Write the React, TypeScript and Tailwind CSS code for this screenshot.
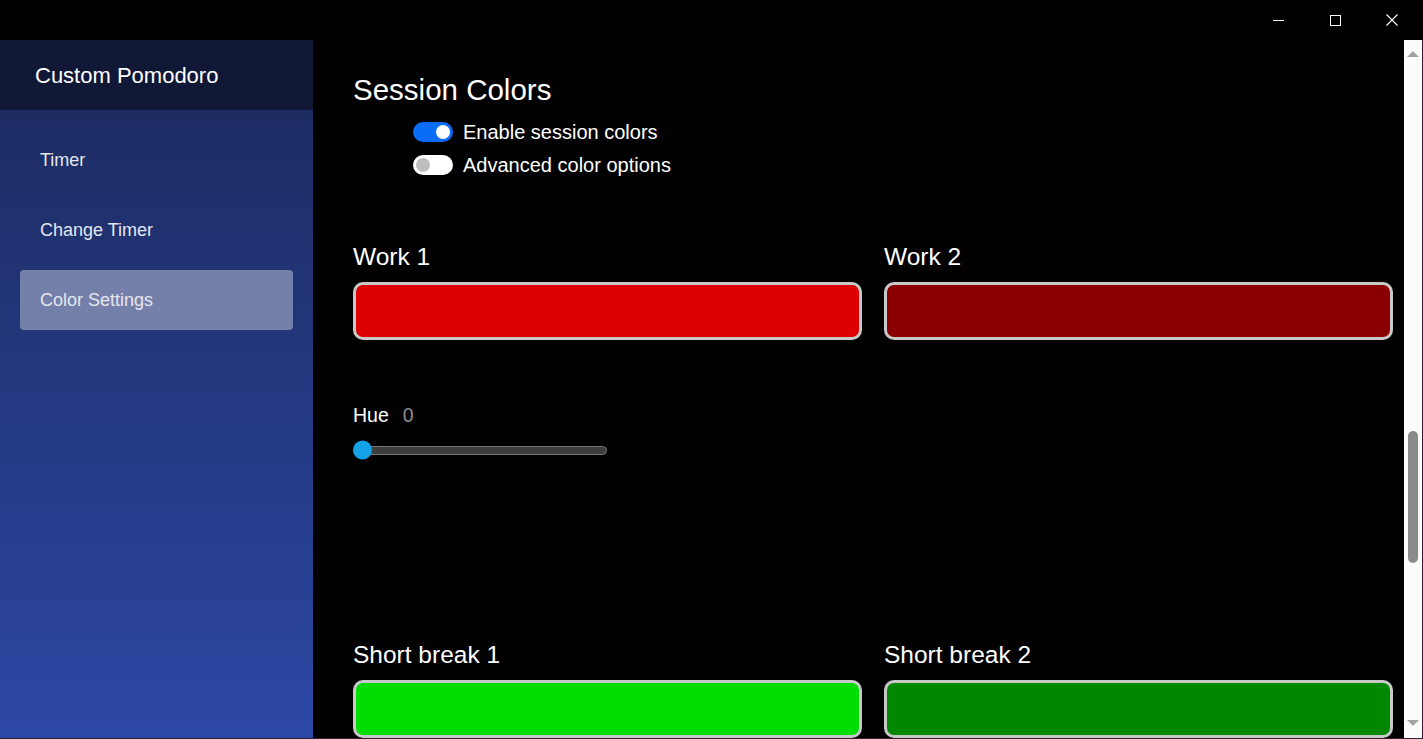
import React from 'react';

const font = { fontFamily: '"Liberation Sans", Arial, sans-serif' };

function Toggle({ on }: { on: boolean }) {
  return (
    <div
      className={`flex h-5 w-10 items-center rounded-full px-[3px] ${
        on ? 'justify-end bg-[#0b6cf5]' : 'justify-start bg-white'
      }`}
    >
      <div className={`h-[14px] w-[14px] rounded-full ${on ? 'bg-white' : 'bg-[#bdbdbd]'}`} />
    </div>
  );
}

function Swatch({ label, color }: { label: string; color: string }) {
  return (
    <div className="flex flex-1 flex-col">
      <div className="text-[24.5px] leading-[28px] text-white">{label}</div>
      <div
        className={`mt-[11px] h-[58px] rounded-[10px] border-[3px] border-[#c8c8c8] ${color}`}
      />
    </div>
  );
}

function TitleBar() {
  return (
    <div className="flex h-10 items-center justify-end bg-black pr-[2px]">
      <div className="flex h-10 w-[58px] items-center justify-center">
        <div className="h-px w-[11px] bg-white" />
      </div>
      <div className="flex h-10 w-[56px] items-center justify-center">
        <div className="h-[11px] w-[11px] border border-white" />
      </div>
      <div className="flex h-10 w-[58px] items-center justify-center">
        <svg width="12" height="12" viewBox="0 0 12 12">
          <path d="M0.5 0.5 L11.5 11.5 M11.5 0.5 L0.5 11.5" stroke="white" strokeWidth="1.1" />
        </svg>
      </div>
    </div>
  );
}

function Sidebar() {
  const items = ['Timer', 'Change Timer', 'Color Settings'];
  return (
    <div className="flex w-[313px] shrink-0 flex-col bg-gradient-to-b from-[#1b295c] to-[#2c48a5]">
      <div className="flex h-[70px] items-center bg-[#101836] pl-[35px] text-[22px] text-white">
        Custom Pomodoro
      </div>
      <div className="flex flex-col gap-[10px] px-5 pt-[20px]">
        {items.map((item) => (
          <div
            key={item}
            className={`flex h-[60px] items-center rounded-[4px] px-5 text-[18px] text-[#e4e6ee] ${
              item === 'Color Settings' ? 'bg-[#7580aa]' : ''
            }`}
          >
            {item}
          </div>
        ))}
      </div>
    </div>
  );
}

function Scrollbar() {
  return (
    <div className="flex w-[19px] shrink-0 flex-col items-center border-r border-[#2a1f3a] bg-[#fcfcfc]">
      <div className="flex h-[17px] w-full items-end justify-center">
        <div className="h-0 w-0 border-x-[6px] border-b-[6px] border-x-transparent border-b-[#a3a3a3]" />
      </div>
      <div className="h-[374px]" />
      <div className="h-[132px] w-[10px] rounded-full bg-[#8b8b8b]" />
      <div className="flex-1" />
      <div className="flex h-[20px] w-full items-start justify-center pt-[2px]">
        <div className="h-0 w-0 border-x-[6px] border-t-[6px] border-x-transparent border-t-[#a3a3a3]" />
      </div>
    </div>
  );
}

export default function App() {
  return (
    <div className="flex h-[739px] w-[1423px] flex-col overflow-hidden bg-black" style={font}>
      <TitleBar />
      <div className="flex min-h-0 flex-1 border-b border-[#2a1f3a]">
        <Sidebar />
        <div className="flex min-w-0 flex-1 flex-col overflow-hidden pl-10 pr-[11px] pt-[32px]">
          <div className="text-[29.5px] leading-[36px] text-white">Session Colors</div>
          <div className="ml-[60px] mt-[14px] flex flex-col gap-[13px]">
            <div className="flex items-center gap-[10px]">
              <Toggle on />
              <span className="text-[20px] leading-[20px] text-white">Enable session colors</span>
            </div>
            <div className="flex items-center gap-[10px]">
              <Toggle on={false} />
              <span className="text-[20px] leading-[20px] text-white">Advanced color options</span>
            </div>
          </div>
          <div className="mt-[68px] flex gap-[22px]">
            <Swatch label="Work 1" color="bg-[#de0000]" />
            <Swatch label="Work 2" color="bg-[#8a0000]" />
          </div>
          <div className="mt-[64px] flex items-baseline gap-[14px] text-[19.5px] leading-[22px]">
            <span className="text-white">Hue</span>
            <span className="text-[#8d8d8d]">0</span>
          </div>
          <div className="mt-[15px] flex h-[18px] w-[254px] items-center">
            <div className="relative h-[9px] w-full rounded-full border border-[#777] bg-[#3d3d3d]">
              <div className="absolute left-[-1px] top-1/2 h-[19px] w-[19px] -translate-y-1/2 rounded-full bg-[#14a2e6]" />
            </div>
          </div>
          <div className="mt-[182px] flex gap-[22px]">
            <Swatch label="Short break 1" color="bg-[#00dd00]" />
            <Swatch label="Short break 2" color="bg-[#008800]" />
          </div>
        </div>
        <Scrollbar />
      </div>
    </div>
  );
}
